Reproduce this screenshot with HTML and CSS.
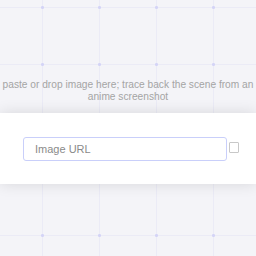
FILE: index.html
```html
<!DOCTYPE html>
<html lang="en">
<head>
    <meta charset="UTF-8">
    <meta name="viewport" content="width=device-width, initial-scale=1.0">
    <title>trace.moe</title>
    <link rel="stylesheet" href="styles.css">
</head>
<body>
    <main class="page">
        <p class="hint">paste or drop image here; trace back the scene from an anime screenshot</p>
        <div class="card">
            <form class="search">
                <input type="url" class="url-input" placeholder="Image URL">
                <input type="checkbox" class="cut-borders">
            </form>
        </div>
    </main>
</body>
</html>
```

FILE: styles.css
```css
html, body {
    margin: 0;
    padding: 0;
    height: 100%;
}
body {
    font-family: "Liberation Sans", Arial, sans-serif;
    background-color: #f4f4f8;
    background-image:
        radial-gradient(circle, #d4d4f6 1.2px, transparent 1.8px),
        linear-gradient(to right, #ebebf6 1px, transparent 1px),
        linear-gradient(to bottom, #ebebf6 1px, transparent 1px);
    background-size: 57px 57px;
    background-position: 14px -21px, 42px 0, 0 7px;
    overflow: hidden;
}
.page {
    padding-top: 79px;
}
.hint {
    margin: 0 0 10px;
    text-align: center;
    font-size: 10.2px;
    line-height: 12px;
    color: #a4a4a4;
}
.card {
    background-color: #fff;
    padding: 24px 0 23px;
    box-shadow: 0 0 14px rgba(0, 0, 0, 0.12);
}
.search {
    display: flex;
    align-items: center;
    padding-left: 23px;
}
.url-input {
    width: 204px;
    height: 24px;
    box-sizing: border-box;
    padding: 0 11px;
    border: 1px solid #c9cffa;
    border-radius: 3px;
    font-family: inherit;
    font-size: 11px;
    color: #444;
    outline: none;
}
.url-input::placeholder {
    color: #8a8a8a;
}
.cut-borders {
    appearance: none;
    width: 10px;
    height: 11px;
    margin: 0 0 4px 2px;
    border: 1px solid #c8c8c8;
    border-radius: 1px;
    background: #fff;
}
```
